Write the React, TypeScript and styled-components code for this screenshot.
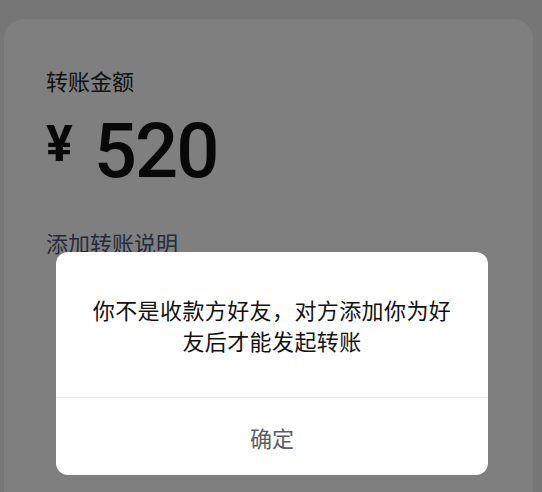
import styled, { createGlobalStyle } from 'styled-components';

const GlobalStyle = createGlobalStyle`
  html, body {
    margin: 0;
    padding: 0;
    background: #ececec;
    font-family: "Noto Sans CJK SC", "Noto Sans", sans-serif;
  }
  * { box-sizing: border-box; }
`;

const Screen = styled.div`
  position: relative;
  width: 542px;
  height: 492px;
  overflow: hidden;
  background: #ececec;
  padding-top: 19px;
  display: flex;
  flex-direction: column;
`;

const Card = styled.div`
  flex: 1;
  margin: 0 9px 0 4px;
  background: #fff;
  border-radius: 20px 20px 0 0;
  padding: 46px 42px 0 42px;
  display: flex;
  flex-direction: column;
`;

const Label = styled.div`
  font-size: 22px;
  line-height: 30px;
  color: #222;
`;

const AmountRow = styled.div`
  display: flex;
  align-items: flex-start;
  margin-top: 18px;
  color: #111;
  font-family: Roboto, "Noto Sans", sans-serif;
  line-height: 1;
`;

const Currency = styled.span`
  font-size: 50px;
  font-weight: 700;
  margin-top: 6px;
  margin-right: 21px;
`;

const Digits = styled.span`
  font-size: 76px;
  font-weight: 500;
  letter-spacing: -2px;
`;

const NoteLink = styled.div`
  margin-top: 38px;
  font-size: 22px;
  line-height: 30px;
  color: #4f5672;
`;

const Mask = styled.div`
  position: absolute;
  inset: 0;
  background: rgba(0, 0, 0, 0.5);
  display: flex;
  align-items: flex-start;
  padding: 252px 0 0 56px;
`;

const Dialog = styled.div`
  width: 432px;
  background: #fff;
  border-radius: 12px;
  overflow: hidden;
  display: flex;
  flex-direction: column;
`;

const Message = styled.div`
  padding: 42px 36px 41px;
  font-size: 22px;
  line-height: 31px;
  letter-spacing: 0.4px;
  text-align: center;
  color: #111;
`;

const Divider = styled.div`
  height: 1px;
  background: #ececec;
`;

const ConfirmButton = styled.button`
  height: 77px;
  border: none;
  background: transparent;
  font-family: inherit;
  font-size: 22px;
  color: #5a5d66;
  display: flex;
  align-items: center;
  justify-content: center;
  padding: 0;
  cursor: pointer;
`;

export default function App() {
  return (
    <>
      <GlobalStyle />
      <Screen>
        <Card>
          <Label>转账金额</Label>
          <AmountRow>
            <Currency>¥</Currency>
            <Digits>520</Digits>
          </AmountRow>
          <NoteLink>添加转账说明</NoteLink>
        </Card>
        <Mask>
          <Dialog>
            <Message>你不是收款方好友，对方添加你为好友后才能发起转账</Message>
            <Divider />
            <ConfirmButton>确定</ConfirmButton>
          </Dialog>
        </Mask>
      </Screen>
    </>
  );
}
